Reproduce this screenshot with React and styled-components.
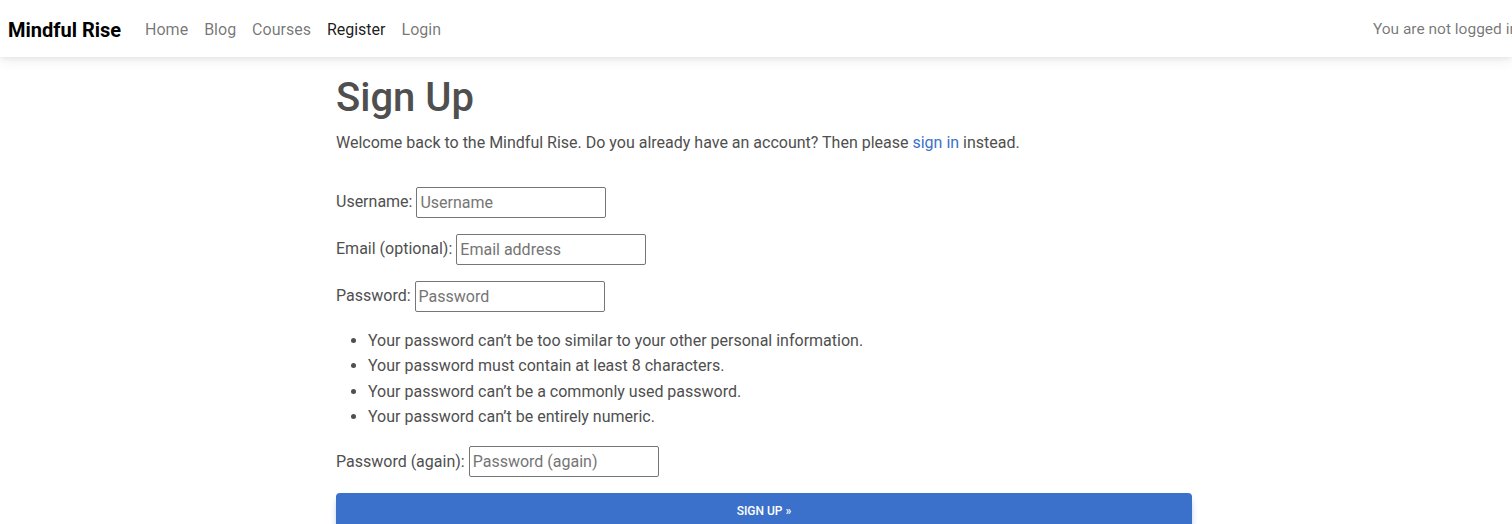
import React from "react";
import styled, { createGlobalStyle } from "styled-components";

const GlobalStyle = createGlobalStyle`
  html, body {
    margin: 0;
    padding: 0;
    overflow-x: hidden;
    background: #fff;
    font-family: Roboto, "Liberation Sans", sans-serif;
    color: #4f4f4f;
    font-size: 16px;
    line-height: 1.6;
  }
  * {
    box-sizing: border-box;
  }
`;

// Navbar
const Navbar = styled.nav`
  height: 57px;
  display: flex;
  align-items: center;
  padding: 2px 0 0 8px;
  background: #fff;
  box-shadow: 0 4px 12px 0 rgba(0, 0, 0, 0.07), 0 2px 4px rgba(0, 0, 0, 0.05);
  position: relative;
  z-index: 1;
  overflow: hidden;
`;

const Brand = styled.a`
  font-size: 20px;
  font-weight: 700;
  color: #000;
  text-decoration: none;
  margin-right: 16px;
`;

const NavList = styled.ul`
  display: flex;
  list-style: none;
  margin: 0;
  padding: 0;
`;

const NavLink = styled.a`
  display: block;
  padding: 0 8px;
  color: ${(props) => (props.active ? "rgba(0, 0, 0, 0.9)" : "rgba(0, 0, 0, 0.55)")};
  text-decoration: none;
`;

const Status = styled.span`
  margin-left: auto;
  flex-shrink: 0;
  margin-right: -6px;
  font-size: 15.5px;
  white-space: nowrap;
  color: rgba(0, 0, 0, 0.55);
`;

// Main content
const Container = styled.main`
  width: 896px;
  margin: 0 auto;
  padding: 17px 12px 0 28px;
`;

const Title = styled.h1`
  font-size: 40px;
  font-weight: 500;
  line-height: 1.2;
  margin: 0 0 8px;
  color: #4f4f4f;
`;

const Intro = styled.p`
  margin: 0 0 31px;
`;

const Link = styled.a`
  color: #3b71ca;
  text-decoration: none;
`;

const Field = styled.p`
  margin: 0 0 16px;
  display: flex;
  align-items: center;
  gap: 4px;
`;

const Input = styled.input`
  width: 190px;
  height: 31px;
  font-family: Roboto, "Liberation Sans", sans-serif;
  font-size: 16px;
  color: #4f4f4f;
  padding: 1px 3px;
  border: 1px solid #767676;
  border-radius: 2px;
  outline: none;

  &::placeholder {
    color: #757575;
  }
`;

const HelpList = styled.ul`
  margin: 0 0 16px;
  padding-left: 32px;
`;

const SubmitButton = styled.button`
  width: 100%;
  height: 36px;
  border: none;
  border-radius: 4px;
  background: #3b71ca;
  color: #fff;
  font-family: Roboto, "Liberation Sans", sans-serif;
  font-size: 12px;
  font-weight: 500;
  text-transform: uppercase;
  box-shadow: 0 4px 9px -4px #3b71ca;
  cursor: pointer;
`;

const navItems = [
  { label: "Home" },
  { label: "Blog" },
  { label: "Courses" },
  { label: "Register", active: true },
  { label: "Login" },
];

const helpTexts = [
  "Your password can’t be too similar to your other personal information.",
  "Your password must contain at least 8 characters.",
  "Your password can’t be a commonly used password.",
  "Your password can’t be entirely numeric.",
];

const App = () => {
  return (
    <>
      <GlobalStyle />
      <Navbar>
        <Brand href="#">Mindful Rise</Brand>
        <NavList>
          {navItems.map((item) => (
            <li key={item.label}>
              <NavLink href="#" active={item.active}>
                {item.label}
              </NavLink>
            </li>
          ))}
        </NavList>
        <Status>You are not logged in</Status>
      </Navbar>
      <Container>
        <Title>Sign Up</Title>
        <Intro>
          Welcome back to the Mindful Rise. Do you already have an account? Then please{" "}
          <Link href="#">sign in</Link> instead.
        </Intro>
        <form onSubmit={(e) => e.preventDefault()}>
          <Field>
            <label htmlFor="id_username">Username:</label>
            <Input id="id_username" type="text" placeholder="Username" />
          </Field>
          <Field>
            <label htmlFor="id_email">Email (optional):</label>
            <Input id="id_email" type="email" placeholder="Email address" />
          </Field>
          <Field>
            <label htmlFor="id_password1">Password:</label>
            <Input id="id_password1" type="password" placeholder="Password" />
          </Field>
          <HelpList>
            {helpTexts.map((text) => (
              <li key={text}>{text}</li>
            ))}
          </HelpList>
          <Field>
            <label htmlFor="id_password2">Password (again):</label>
            <Input id="id_password2" type="password" placeholder="Password (again)" />
          </Field>
          <SubmitButton type="submit">Sign Up &raquo;</SubmitButton>
        </form>
      </Container>
    </>
  );
};

export default App;
